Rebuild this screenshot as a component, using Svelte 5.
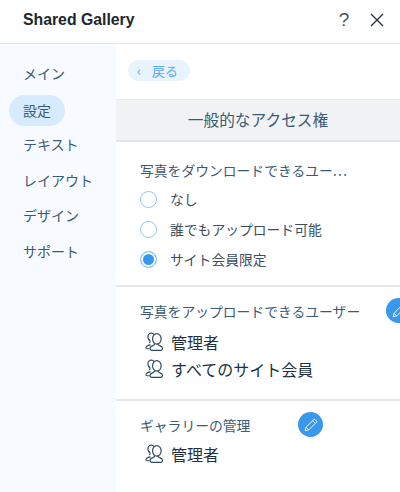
<script>
  const navItems = ['メイン', '設定', 'テキスト', 'レイアウト', 'デザイン', 'サポート'];
  const activeNav = '設定';
  const radios = ['なし', '誰でもアップロード可能', 'サイト会員限定'];
  let selected = $state('サイト会員限定');
</script>

{#snippet pencil()}
  <button class="edit" aria-label="編集">
    <svg viewBox="0 0 16 16" width="16" height="16" fill="none" stroke="#fff" stroke-width="0.9" stroke-linejoin="round">
      <path d="M2.2 13.8l.9-3.6 7.6-7.600a1 1 0 0 1 1.400 0l1.300 1.300a1 1 0 0 1 0 1.400l-7.600 7.600z" />
      <path d="M3.100 10.200l2.700 2.700M9.600 3.700l2.700 2.700" />
    </svg>
  </button>
{/snippet}

{#snippet role(name)}
  <div class="role">
    <svg viewBox="0 0 18 18" width="22" height="22" fill="none" stroke="#2f4a60" stroke-width="0.95" stroke-linejoin="round">
      <path d="M5.400 11.400c-1.700.2-3.300.7-3.700 1.800-.2.700.1 1.300.9 1.300h2" />
      <path d="M8.300 3.200C7.700 2.200 6.700 1.700 5.700 1.800 4 2 3 3.400 3.200 5c.1 1.100.7 2.300 1.700 3 .1 1-.1 1.500-.5 2" />
      <ellipse cx="10.500" cy="6.500" rx="3.500" ry="4.300" />
      <path d="M8.700 10.200c.2 1-.4 1.500-1.800 2-1.200.4-2 1-2 2.200 0 1 .6 1.400 1.500 1.400h7.300c1 0 1.500-.5 1.500-1.400 0-1.200-.8-1.800-2-2.200-1.400-.5-2-1-1.800-2" />
    </svg>
    <span>{name}</span>
  </div>
{/snippet}

<div class="panel">
  <header>
    <h1>Shared Gallery</h1>
    <div class="actions">
      <button class="help" aria-label="ヘルプ">?</button>
      <button class="close" aria-label="閉じる">
        <svg viewBox="0 0 14 14" width="14" height="14" stroke="#2b3440" stroke-width="1.400" fill="none">
          <path d="M1 1l12 12M13 1L1 13" />
        </svg>
      </button>
    </div>
  </header>

  <div class="body">
    <nav>
      {#each navItems as item}
        <div class="nav-item" class:active={item === activeNav}>{item}</div>
      {/each}
    </nav>

    <main>
      <div class="back-row">
        <button class="back"><span class="chev">‹</span><span>戻る</span></button>
      </div>
      <div class="section-title">一般的なアクセス権</div>

      <section class="downloads">
        <div class="label">写真をダウンロードできるユー<span class="dots">...</span></div>
        <div class="radios">
          {#each radios as r}
            <label class="radio">
              <input type="radio" name="dl" value={r} bind:group={selected} />
              <span class="dot"></span>
              <span>{r}</span>
            </label>
          {/each}
        </div>
      </section>

      <section class="uploads">
        <div class="label-row">
          <div class="label">写真をアップロードできるユーザー</div>
          {@render pencil()}
        </div>
        {@render role('管理者')}
        {@render role('すべてのサイト会員')}
      </section>

      <section class="manage">
        <div class="label-row">
          <div class="label">ギャラリーの管理</div>
          {@render pencil()}
        </div>
        {@render role('管理者')}
      </section>
    </main>
  </div>
</div>

<style>
  :global(body) {
    margin: 0;
    background: #fff;
  }

  .panel {
    width: 400px;
    height: 492px;
    overflow: hidden;
    display: flex;
    flex-direction: column;
    font-family: "Noto Sans CJK JP", "Noto Sans", sans-serif;
    color: #3b5a74;
  }

  header {
    height: 39px;
    flex: none;
    border-bottom: 1px solid #e6e9ec;
    display: flex;
    align-items: center;
    justify-content: space-between;
    padding: 0 16px 4px 23px;
  }

  h1 {
    margin: 0;
    font-family: "Liberation Sans", sans-serif;
    font-size: 15.800px;
    font-weight: 700;
    color: #20262c;
  }

  .actions {
    display: flex;
    align-items: center;
    gap: 19px;
  }

  button {
    border: 0;
    padding: 0;
    background: none;
    font: inherit;
  }

  .help {
    font: 400 19px "Liberation Sans", sans-serif;
    color: #4a545e;
    width: 14px;
    line-height: 20px;
  }

  .close {
    display: flex;
  }

  .body {
    flex: 1;
    display: flex;
    min-height: 0;
  }

  nav {
    width: 116px;
    flex: none;
    box-sizing: border-box;
    background: #f7fbff;
    padding: 12px 0 0 9px;
    display: flex;
    flex-direction: column;
  }

  .nav-item {
    width: 56px;
    height: 35.600px;
    padding-left: 14px;
    box-sizing: border-box;
    font-size: 14px;
    line-height: 35px;
    white-space: nowrap;
  }

  .nav-item.active {
    background: #d6ebfd;
    border-radius: 16px;
    height: 31px;
    line-height: 30px;
    margin: 3px 0 1.600px;
  }

  main {
    flex: 1;
    min-width: 0;
    overflow: hidden;
  }

  .back-row {
    height: 55px;
    box-sizing: border-box;
    padding: 16px 0 0 12px;
  }

  .back {
    width: 62px;
    height: 21px;
    border-radius: 11px;
    background: #e7f3fd;
    color: #5aa9ef;
    font-size: 13px;
    display: flex;
    align-items: center;
    gap: 11px;
    padding-left: 9px;
    box-sizing: border-box;
  }

  .chev {
    font-size: 13px;
    line-height: 18px;
  }

  .section-title {
    height: 40px;
    background: #f0f2f4;
    border-top: 1px solid #e8ebee;
    border-bottom: 2px solid #dfe5eb;
    text-align: center;
    font-size: 15.700px;
    line-height: 40px;
  }

  section {
    padding-left: 24px;
    border-bottom: 2px solid #e6e9ec;
    box-sizing: border-box;
  }

  .label {
    font-size: 13.800px;
    line-height: 20px;
    white-space: nowrap;
  }

  .dots {
    letter-spacing: 1.300px;
  }

  .downloads {
    height: 145px;
    padding-top: 18px;
  }

  .radios {
    margin-top: 4px;
    display: flex;
    flex-direction: column;
  }

  .radio {
    height: 30px;
    display: flex;
    align-items: center;
    gap: 13px;
    font-size: 13.800px;
    color: #3b4f60;
  }

  .radio input {
    display: none;
  }

  .dot {
    width: 15px;
    height: 15px;
    border-radius: 50%;
    border: 1px solid #8fc4f5;
    background: #fff;
    flex: none;
  }

  .radio input:checked + .dot {
    background: #3899ec;
    box-shadow: inset 0 0 0 2px #fff;
  }

  .label-row {
    display: flex;
    align-items: center;
    gap: 26px;
    height: 25px;
  }

  .uploads {
    height: 114px;
    padding-top: 11px;
  }

  .uploads .label-row {
    margin-bottom: 5px;
  }

  .manage {
    border-bottom: 0;
    padding-top: 11px;
  }

  .manage .label-row {
    gap: 0;
    justify-content: space-between;
    width: 183px;
    margin-bottom: 3px;
  }

  .edit {
    width: 25px;
    height: 25px;
    border-radius: 50%;
    background: #3899ec;
    flex: none;
    display: flex;
    align-items: center;
    justify-content: center;
  }

  .role {
    height: 27px;
    display: flex;
    align-items: center;
    gap: 5px;
    padding-left: 4px;
    font-size: 16px;
    color: #22313f;
    white-space: nowrap;
  }
</style>
